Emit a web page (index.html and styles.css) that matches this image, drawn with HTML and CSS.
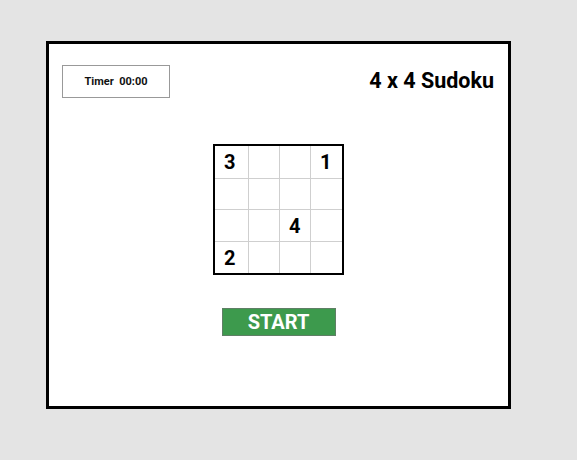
FILE: index.html
```html
<!DOCTYPE html>
<html>
<head>
<meta charset="utf-8">
<link rel="stylesheet" href="styles.css">
</head>
<body>
<div class="frame">
  <div class="header">
    <div class="timer">Timer  00:00</div>
    <div class="title">4 x 4 Sudoku</div>
  </div>
  <div class="board">
    <div class="cell">3</div><div class="cell"></div><div class="cell"></div><div class="cell">1</div>
    <div class="cell"></div><div class="cell"></div><div class="cell"></div><div class="cell"></div>
    <div class="cell"></div><div class="cell"></div><div class="cell">4</div><div class="cell"></div>
    <div class="cell">2</div><div class="cell"></div><div class="cell"></div><div class="cell"></div>
  </div>
  <button class="start">START</button>
</div>
</body>
</html>
```
FILE: styles.css
```css
body {
  margin: 0;
  background: #e4e4e4;
  font-family: Roboto, "Liberation Sans", sans-serif;
}
.frame {
  margin: 41px 0 0 46px;
  width: 459px;
  height: 362px;
  border: 3px solid #000;
  background: #fff;
  display: flex;
  flex-direction: column;
  align-items: center;
}
.header {
  align-self: stretch;
  display: flex;
  justify-content: space-between;
  align-items: flex-start;
  padding: 21px 14px 0 13px;
}
.timer {
  width: 106px;
  height: 31px;
  border: 1px solid #999;
  display: flex;
  align-items: center;
  justify-content: center;
  font-size: 11px;
  font-weight: 700;
  white-space: pre;
  color: #111;
}
.title {
  margin-top: 3px;
  font-size: 21.5px;
  font-weight: 700;
  color: #000;
}
.board {
  margin-top: 46px;
  display: grid;
  grid-template-columns: 33px 30px 30px 31px;
  grid-template-rows: 32px 30px 31px 31px;
  gap: 1px;
  background: #cfcfcf;
  border: 2px solid #000;
}
.cell {
  background: #fff;
  display: flex;
  align-items: center;
  padding-left: 9px;
  font-size: 20px;
  font-weight: 700;
  color: #000;
}
.start {
  margin-top: 33px;
  width: 114px;
  height: 28px;
  padding: 0;
  background: #3d9a4d;
  border: 1px solid #5f7f65;
  color: #fff;
  font-family: Roboto, "Liberation Sans", sans-serif;
  font-size: 20px;
  font-weight: 700;
}
```
